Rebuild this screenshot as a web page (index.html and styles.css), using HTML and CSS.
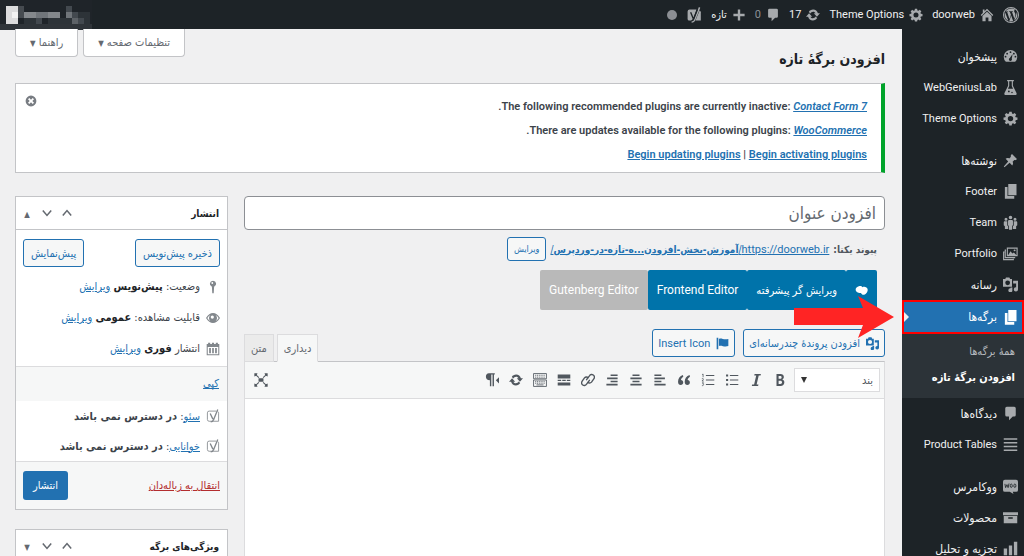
FILE: index.html
```html
<!DOCTYPE html>
<html lang="fa" dir="rtl">
<head>
<meta charset="utf-8">
<title>افزودن برگهٔ تازه</title>
<link rel="stylesheet" href="styles.css">
</head>
<body>
<svg class="sprite" aria-hidden="true">
  <symbol id="i-wp" viewBox="0 0 20 20"><path fill-rule="evenodd" d="M10 0a10 10 0 1 0 0 20a10 10 0 1 0 0-20zM10 1.2a8.8 8.8 0 1 1 0 17.6a8.8 8.8 0 1 1 0-17.6z"/><path d="M2 10c0 3.3 1.9 6 4.6 7.300L2.700 6.900C2.200 7.800 2 8.900 2 10zM15.500 9.600c0-1-.4-1.700-.7-2.300-.4-.7-.9-1.300-.9-2 0-.8.6-1.500 1.500-1.500C12 .9 6 1.500 3.400 5.600h.5l2.200-.1c.4 0 .4.600 0 .6l-.9.100 2.900 8.700 1.800-5.300-1.300-3.500-.8-.1c-.5 0-.4-.7 0-.7l2.200.1 2.200-.1c.4 0 .5.600 0 .7l-.9.100 2.900 8.600.8-2.600c.3-1.100.5-1.900.5-2.500zM10.200 10.700l-2.400 7c1.600.4 3.300.4 4.900-.2l-2.500-6.800zM17 6.200c.2 1-.1 2.200-.5 3.400L14 16.900c3.700-2.100 5-6.800 3-10.700z"/></symbol>
  <symbol id="i-home" viewBox="0 0 20 20"><path d="M10 1l9 9-1.300 1.300L10 3.700l-7.700 7.600L1 10l3-3V2h2.500v2.500zM10 5.200l6.500 6.300V19h-4.500v-5.500H8V19H3.500v-7.500z"/></symbol>
  <symbol id="i-gear" viewBox="0 0 20 20"><path fill-rule="evenodd" d="M8.400 1h3.200l.4 2.400 1.500.6 2-1.400 2.200 2.300-1.400 2 .6 1.400 2.400.4v3l-2.400.5-.6 1.400 1.400 2-2.200 2.200-2-1.400-1.500.6-.4 2.400H8.400L8 17l-1.500-.6-2 1.400-2.200-2.200 1.400-2-.6-1.400L.700 11.700v-3l2.400-.4.600-1.400-1.400-2 2.200-2.300 2 1.400L8 3.400zM10 6.500a3.600 3.600 0 1 0 0 7.200a3.600 3.600 0 1 0 0-7.200z"/></symbol>
  <symbol id="i-update" viewBox="0 0 20 20"><path d="M10.200 2.300c3.300 0 6 2.200 6.800 5.300H20l-4.400 5-4.400-5h2.500c-.8-1.600-2-2.400-3.500-2.400-1.800 0-3.200 1-3.900 2.500L4 5.600c1.300-2 3.500-3.300 6.200-3.300zM4.400 7.400l4.400 5H6.300c.8 1.600 2 2.400 3.500 2.400 1.800 0 3.200-1 3.900-2.500l2.300 2.100c-1.300 2-3.500 3.300-6.200 3.300-3.300 0-6-2.200-6.800-5.300H0z"/></symbol>
  <symbol id="i-comment" viewBox="0 0 20 20"><path d="M5 1h10a2 2 0 0 1 2 2v9a2 2 0 0 1-2 2h-2l-5 5v-5H5a2 2 0 0 1-2-2V3a2 2 0 0 1 2-2z"/></symbol>
  <symbol id="i-plus" viewBox="0 0 20 20"><path d="M8.300 2h3.400v6.300H18v3.400h-6.300V18H8.300v-6.300H2V8.300h6.300z"/></symbol>
  <symbol id="i-yoast" viewBox="0 0 20 20"><path d="M4.500 3h8.700L8.600 15.500H7.300l1.500 1.500H4a2 2 0 0 1-2-2V5.500A2.500 2.500 0 0 1 4.500 3z"/><path d="M17 4.500c1 .5 1.500 1.200 1.500 2.200V17h-6.700z"/><path fill="none" stroke="currentColor" stroke-width="1.900" d="M17 .500L11 15.600c-.7 2-1.900 3.200-4 3.200"/><path fill="none" stroke="#1d2327" stroke-width="1.700" d="M5.800 6.500l3.600 8.700M14.200 3L9.300 15.600c-.4 1-1 1.500-2.600 1.700"/></symbol>
  <symbol id="i-yoastline" viewBox="0 0 20 20"><g fill="none" stroke="currentColor"><path d="M14.500 3H4.500A2.500 2.500 0 0 0 2 5.500V15a2.500 2.500 0 0 0 2.500 2.500H18V6c0-1-.5-2-1.200-2.500" stroke-width="1.200"/><path d="M6 6.500l3.800 8M16.800.8l-6 14.500c-.8 2-1.800 3.200-4 3.200" stroke-width="1.900"/></g></symbol>
  <symbol id="i-dash" viewBox="0 0 20 20"><path fill-rule="evenodd" d="M3.800 17h12.400A9 9 0 1 0 3.800 17zM10 3a1.200 1.200 0 1 1 0 2.400A1.200 1.200 0 0 1 10 3zM5.500 5a1.200 1.200 0 1 1 0 2.400a1.200 1.200 0 0 1 0-2.400zM14.500 5a1.200 1.200 0 1 1 0 2.400a1.200 1.200 0 0 1 0-2.400zM3.400 9a1.200 1.200 0 1 1 0 2.400a1.200 1.200 0 0 1 0-2.400zM16.600 9a1.200 1.200 0 1 1 0 2.400a1.200 1.200 0 0 1 0-2.400zM12.800 6.500L11.700 13a2 2 0 1 1-2.600-1z"/></symbol>
  <symbol id="i-flask" viewBox="0 0 20 20"><path fill-rule="evenodd" d="M5.500 0h9v1.600h-1.300v6l4.800 9.600c.7 1.600-.2 2.800-1.500 2.800h-13C2.200 20 1.300 18.800 2 17.200l4.800-9.600v-6H5.500zM8.300 1.600v6.500l-1.700 3.400h6.800l-1.700-3.400V1.600zM7.800 14a1.200 1.200 0 1 0 0 2.400a1.200 1.200 0 0 0 0-2.400zM12 15.500a1 1 0 1 0 0 2a1 1 0 0 0 0-2z"/></symbol>
  <symbol id="i-pin" viewBox="0 0 20 20"><path d="M10.400 3l1.600-1.600 6.600 6.600L17 9.600c-1-.3-1.800-.2-2.500.4l-1.700 1.800c1 1.700.7 3.400-.5 4.700l-3.500-3.500L2 19l-.9-.900 5.800-6.900-3.400-3.400C4.800 6.500 6.500 6.200 8.200 7.200L10 5.500c.6-.7.700-1.600.4-2.500z"/></symbol>
  <symbol id="i-pages" viewBox="0 0 20 20"><path d="M7 0h11v15H7zM2.500 4H6v12h9v3.500H2.500z"/></symbol>
  <symbol id="i-team" viewBox="0 0 20 20"><path d="M10 1a2.400 2.400 0 1 1 0 4.800A2.400 2.400 0 0 1 10 1zM4 3.500a2 2 0 1 1 0 4a2 2 0 0 1 0-4zM16 3.500a2 2 0 1 1 0 4a2 2 0 0 1 0-4zM8.500 6.500h3c1 0 1.800.7 1.800 1.800V13.500l-1.300 1v5H8v-5l-1.300-1V8.300C6.700 7.200 7.500 6.500 8.500 6.500zM2.500 8.300h3.200V14l1.300 1v3.500H2.500V15L1 13.500v-3.500C1 9 1.500 8.300 2.500 8.300zM17.500 8.300h-3.200V14L13 15v3.500h4.500V15l1.500-1.500v-3.500c0-1-.5-1.700-1.500-1.700z"/></symbol>
  <symbol id="i-gallery" viewBox="0 0 20 20"><g fill="none" stroke="currentColor" stroke-width="1.500"><path d="M5.800 2.800h13v10h-13zM4 5.500H3v10h12.500V14.500M2 8H.8v10.200h13V17"/></g><path d="M7 12l3-5 2.500 3 2-1.500 3.200 3.500z"/><circle cx="15.500" cy="5.800" r="1.300"/></symbol>
  <symbol id="i-media" viewBox="0 0 20 20"><path fill-rule="evenodd" d="M1 2.500h2l1-2h4.500l1 2H12V13H0V2.500zM6.200 4.500a3.200 3.200 0 1 0 0 6.400a3.200 3.200 0 0 0 0-6.400zM13.500 5H20v11.500a2.800 2.800 0 1 1-2.500-2.800V8.500h-4zM10 14h2.500v3.500A2.700 2.700 0 1 1 10 15z"/></symbol>
  <symbol id="i-lines" viewBox="0 0 20 20"><path d="M1 1.500h18v2H1zM1 6.500h18v2H1zM1 11.500h18v2H1zM1 16.500h18v2H1z"/></symbol>
  <symbol id="i-woo" viewBox="0 0 20 20"><path d="M2.500 1h15A2.500 2.500 0 0 1 20 3.500v11a2.500 2.500 0 0 1-2.500 2.500H13l1 3-5-3H2.500A2.500 2.500 0 0 1 0 14.500v-11A2.500 2.500 0 0 1 2.500 1z"/><g fill="none" stroke="#1d2327" stroke-width="1.100"><path d="M2.500 6.500l1 5 1.800-4 1.500 4 1.200-5.500"/><ellipse cx="11" cy="9" rx="1.400" ry="2.300"/><ellipse cx="15.800" cy="9" rx="1.400" ry="2.300"/></g></symbol>
  <symbol id="i-box" viewBox="0 0 20 20"><path fill-rule="evenodd" d="M0 3h20v4H0zM1 8h18v9.500H1zM7 9.500v2h6v-2z"/></symbol>
  <symbol id="i-chart" viewBox="0 0 20 20"><path d="M1 10h4.500v9H1zM7.800 6h4.400v13H7.800zM14.500 1H19v18h-4.500z"/></symbol>
  <symbol id="i-up" viewBox="0 0 20 20"><path fill="none" stroke="currentColor" stroke-width="2.600" d="M3 14l7-8 7 8"/></symbol>
  <symbol id="i-down" viewBox="0 0 20 20"><path fill="none" stroke="currentColor" stroke-width="2.600" d="M3 6l7 8 7-8"/></symbol>
  <symbol id="i-key" viewBox="0 0 20 20"><path fill-rule="evenodd" d="M10 1a4.500 4.500 0 0 1 1.600 8.700L11 19H9l-.6-9.300A4.500 4.500 0 0 1 10 1zM9 3a1.300 1.300 0 1 0 0 2.600A1.300 1.300 0 0 0 9 3z"/></symbol>
  <symbol id="i-eye" viewBox="0 0 20 20"><path fill-rule="evenodd" d="M0 10C3 5 6.300 2.800 10 2.800S17 5 20 10c-3 5-6.300 7.200-10 7.200S3 15 0 10zM2 10c1 2 2.400 3.500 4.200 4.400a6 6 0 0 1 0-8.800C4.400 6.500 3 8 2 10zM18 10c-1-2-2.400-3.500-4.200-4.400a6 6 0 0 1 0 8.800C15.600 13.500 17 12 18 10zM9 6.300a2.300 2.300 0 1 0 0 4.600a2.300 2.300 0 0 0 0-4.600z"/></symbol>
  <symbol id="i-cal" viewBox="0 0 20 20"><path fill-rule="evenodd" d="M1 3h2V1h3v2h2.500V1h3v2H14V1h3v2h2v16H1zM2.500 7v10.500h15V7zM4.500 8.500H7v7.500H4.500zM8.800 8.500h2.400v7.500H8.800zM13 8.500h2.500v7.500H13z"/></symbol>
  <symbol id="i-flag" viewBox="0 0 20 20"><path d="M1 1h2.500v18H1zM4.500 3c4-2 7 2 14.500 0v11c-7 2-10.500-2-14.500 0z"/></symbol>
  <symbol id="i-blob" viewBox="0 0 20 20"><path d="M6 3.500c2.500-1 4.500 0 5.500 1.500 2.500-1.500 7.500-.5 8 3.500.5 5-5 9-7.500 8-1.500-.3-2-1.500-3-2.500-2.500 0-7.500-.5-8-5C.7 6 3.500 4 6 3.500z"/></symbol>
  <symbol id="i-close" viewBox="0 0 20 20"><path fill-rule="evenodd" d="M10 1a9 9 0 1 0 0 18a9 9 0 1 0 0-18zM7.200 5L10 7.800 12.800 5 15 7.200 12.200 10l2.800 2.800-2.200 2.200-2.800-2.800L7.200 15 5 12.800 7.800 10 5 7.200z"/></symbol>
  <symbol id="i-bold" viewBox="0 0 20 20"><path fill-rule="evenodd" d="M5 1.500h5.500c3.200 0 5 1.500 5 4.200 0 1.700-.8 2.900-2.200 3.600 1.900.5 2.900 2 2.900 4 0 3.200-2.100 5.200-5.500 5.200H5zM8 4.300v4h2.200c1.300 0 2.100-.7 2.100-2s-.8-2-2.100-2zM8 11v4.600h2.500c1.500 0 2.400-.8 2.400-2.300S12 11 10.500 11z"/></symbol>
  <symbol id="i-italic" viewBox="0 0 20 20"><path d="M8 1.500h9l-.5 2.200h-2.600l-3 12.600h2.600l-.5 2.200H4l.5-2.200h2.800l3-12.600H7.500z"/></symbol>
  <symbol id="i-ul" viewBox="0 0 20 20"><path d="M1.500 2h3v3h-3zM1.500 8.500h3v3h-3zM1.500 15h3v3h-3zM7 3h12v1.400H7zM7 9.300h12v1.400H7zM7 15.700h12v1.400H7z"/></symbol>
  <symbol id="i-ol" viewBox="0 0 20 20"><path d="M7 3h12v1.400H7zM7 9.300h12v1.400H7zM7 15.700h12v1.400H7z"/><path fill="none" stroke="currentColor" stroke-width="1.100" d="M1.500 2.300L3 1.500V6M1.200 8.200c2-1 3 .4 1.500 1.800l-1.300 1.500H4M1.400 14h2.300l-1.200 1.800c2.200 0 1.500 2.700-1.200 2.200"/></symbol>
  <symbol id="i-quote" viewBox="0 0 20 20"><path d="M8.500 3C4 4.500 1.500 8 1.500 12.500c0 3 1.600 4.700 3.800 4.700 2.100 0 3.600-1.500 3.600-3.600 0-2-1.300-3.400-3.200-3.500.2-2 1.300-3.500 3.300-4.800zM18 3c-4.500 1.500-7 5-7 9.500 0 3 1.600 4.700 3.800 4.700 2.100 0 3.600-1.500 3.600-3.600 0-2-1.300-3.400-3.200-3.500.2-2 1.300-3.500 3.300-4.800z"/></symbol>
  <symbol id="i-al" viewBox="0 0 20 20"><path d="M2 2h10v2.300H2zM2 6.500h15v2.300H2zM2 11h10v2.300H2zM2 15.500h16v2.300H2z"/></symbol>
  <symbol id="i-ac" viewBox="0 0 20 20"><path d="M5 2h10v2.300H5zM2 6.500h16v2.300H2zM5 11h10v2.300H5zM2 15.500h16v2.300H2z"/></symbol>
  <symbol id="i-ar" viewBox="0 0 20 20"><path d="M8 2h10v2.300H8zM3 6.500h15v2.300H3zM8 11h10v2.300H8zM2 15.500h16v2.300H2z"/></symbol>
  <symbol id="i-link" viewBox="0 0 20 20"><g fill="none" stroke="currentColor" stroke-width="2" stroke-linecap="round"><path d="M8 9.500L12 4c3-4.500 9.500 0 6.300 4.500L15 13c-1.500 1.700-4 1.700-5.300.3M12 10.500L8 16c-3 4.500-9.500 0-6.300-4.500L5 7c1.500-1.700 4-1.700 5.300-.3"/></g></symbol>
  <symbol id="i-more" viewBox="0 0 20 20"><path d="M1 2h18v6H1zM1 9.700h5v1.800H1zM7.500 9.700h5v1.800h-5zM14 9.700h5v1.800h-5zM1 13.500h18V18H1z"/></symbol>
  <symbol id="i-kb" viewBox="0 0 20 20"><g fill="none" stroke="currentColor" stroke-width="1.200"><path d="M.8.800h18.400v7.400H.8zM.8 10h18.400v9.200H.8z"/><path d="M3 3.200h14M3 5.900h14M3 12.400h14M3 14.600h14" stroke-dasharray="1.600 1"/><path d="M5 17h10"/></g></symbol>
  <symbol id="i-para" viewBox="0 0 20 20"><path d="M5.500.500H14v1.800h-1.200V19h-2V2.300H9V19H7V10.500C-.9 10 .2.500 5.500.500zM20 6v9l-4.500-4.500z"/></symbol>
  <symbol id="i-full" viewBox="0 0 20 20"><path d="M6.500 7.500h7v5h-7zM.5.500H5l-1 2.300L7.500 6l-1 1L3 3.800.500 5zM19.500.500H15l1 2.300L12.500 6l1 1L17 3.800l2.500 1.200zM.5 19.500H5l-1-2.300L7.500 14l-1-1L3 16.200.500 15zM19.500 19.500H15l1-2.300-3.500-3.200 1-1 3.500 3.200 2.500-1.200z"/></symbol>
</svg>

<header class="bar">
  <nav class="bar-items">
    <a class="bar-item wp" href="#" aria-label="WordPress"><svg><use href="#i-wp"/></svg></a>
    <a class="bar-item en" href="#"><svg><use href="#i-home"/></svg>doorweb</a>
    <a class="bar-item en" href="#"><svg><use href="#i-gear"/></svg>Theme Options</a>
    <a class="bar-item en" href="#"><svg><use href="#i-update"/></svg>17</a>
    <a class="bar-item en dim" href="#"><svg><use href="#i-comment"/></svg>0</a>
    <a class="bar-item" href="#"><svg><use href="#i-plus"/></svg>تازه</a>
    <a class="bar-item yoast" href="#" aria-label="سئو"><svg><use href="#i-yoast"/></svg><span class="dot"></span></a>
  </nav>
  <svg class="account" viewBox="0 0 92 30" aria-hidden="true"><path fill="#2f3439" d="M0 0h92v30H0z"/><path fill="#1f2429" d="M0 0h92v24H0z"/><path fill="#dcdcdd" d="M6 6h12v18H6z"/><path fill="#f2f2f2" d="M12 12h6v6h-6z"/><path fill="#464b50" d="M18 6h6v12h-6z"/><path fill="#84888c" d="M24 12h12v6H24zM48 12h12v6H48z"/><path fill="#70757a" d="M36 12h12v6H36zM66 12h6v6h-6z"/><path fill="#43494f" d="M72 12h6v6h-6zM66 6h6v6h-6zM36 18h6v6h-6zM78 18h6v6h-6z"/><path fill="#5d6267" d="M72 18h6v6h-6z"/><path fill="#2d3338" d="M78 12h12v6H78zM24 18h12v6H24zM48 18h24v6H48zM84 18h6v6h-6z"/></svg>
</header>

<div class="shell">
  <aside class="menu">
    <a class="mi" href="#"><svg><use href="#i-dash"/></svg>پیشخوان</a>
    <a class="mi en" href="#"><svg><use href="#i-flask"/></svg>WebGeniusLab</a>
    <a class="mi en" href="#"><svg><use href="#i-gear"/></svg>Theme Options</a>
    <a class="mi gap" href="#"><svg><use href="#i-pin"/></svg>نوشته‌ها</a>
    <a class="mi en" href="#"><svg><use href="#i-pages"/></svg>Footer</a>
    <a class="mi en" href="#"><svg><use href="#i-team"/></svg>Team</a>
    <a class="mi en" href="#"><svg><use href="#i-gallery"/></svg>Portfolio</a>
    <a class="mi" href="#"><svg><use href="#i-media"/></svg>رسانه</a>
    <div class="current">
      <a class="mi on" href="#"><svg><use href="#i-pages"/></svg>برگه‌ها</a>
      <svg class="arrow" viewBox="0 0 100 42" aria-hidden="true"><path fill="#ff2424" d="M0 12h69L64 0l36 21-36 21 5-13H0z"/></svg>
    </div>
    <div class="sub">
      <a href="#">همهٔ برگه‌ها</a>
      <a class="here" href="#">افزودن برگهٔ تازه</a>
    </div>
    <a class="mi" href="#"><svg><use href="#i-comment"/></svg>دیدگاه‌ها</a>
    <a class="mi en" href="#"><svg><use href="#i-lines"/></svg>Product Tables</a>
    <a class="mi gap" href="#"><svg><use href="#i-woo"/></svg>ووکامرس</a>
    <a class="mi" href="#"><svg><use href="#i-box"/></svg>محصولات</a>
    <a class="mi" href="#"><svg><use href="#i-chart"/></svg>تجزیه و تحلیل</a>
  </aside>

  <main class="main">
    <div class="top">
      <h1>افزودن برگهٔ تازه</h1>
      <div class="meta">
        <button type="button">تنظیمات صفحه <i>▼</i></button>
        <button type="button">راهنما <i>▼</i></button>
      </div>
    </div>

    <section class="notice">
      <div class="notice-text en">
        <p>The following recommended plugins are currently inactive: <a href="#"><em>Contact Form 7</em></a>.</p>
        <p>There are updates available for the following plugins: <a href="#"><em>WooCommerce</em></a>.</p>
        <p><a href="#">Begin updating plugins</a> | <a href="#">Begin activating plugins</a></p>
      </div>
      <button class="dismiss" type="button" aria-label="بستن"><svg><use href="#i-close"/></svg></button>
    </section>

    <div class="cols">
      <section class="edit">
        <input class="title" type="text" placeholder="افزودن عنوان" aria-label="افزودن عنوان">
        <div class="perma">
          <b>پیوند یکتا:</b>
          <a href="#" dir="rtl"><bdi class="en">https://doorweb.ir</bdi>/<b>آموزش-بخش-افزودن...ه-تازه-در-وردپرس</b>/</a>
          <button class="btn small" type="button">ویرایش</button>
        </div>
        <div class="switch">
          <button type="button" aria-label="ویرایشگر"><svg><use href="#i-blob"/></svg></button>
          <button type="button">ویرایش گر پیشرفته</button>
          <button class="en" type="button">Frontend Editor</button>
          <button class="en off" type="button">Gutenberg Editor</button>
        </div>
        <div class="tools">
          <button class="btn" type="button"><svg><use href="#i-media"/></svg>افزودن پروندهٔ چندرسانه‌ای</button>
          <button class="btn en" type="button"><svg><use href="#i-flag"/></svg>Insert Icon</button>
          <div class="tabs">
            <button class="active" type="button">دیداری</button>
            <button type="button">متن</button>
          </div>
        </div>
        <div class="editor">
          <div class="toolbar">
            <select aria-label="قالب"><option>بند</option></select>
            <button type="button" aria-label="ضخیم"><svg><use href="#i-bold"/></svg></button>
            <button type="button" aria-label="کج"><svg><use href="#i-italic"/></svg></button>
            <button type="button" aria-label="فهرست"><svg><use href="#i-ul"/></svg></button>
            <button type="button" aria-label="فهرست شماره‌دار"><svg><use href="#i-ol"/></svg></button>
            <button type="button" aria-label="نقل قول"><svg><use href="#i-quote"/></svg></button>
            <button type="button" aria-label="چپ‌چین"><svg><use href="#i-al"/></svg></button>
            <button type="button" aria-label="وسط‌چین"><svg><use href="#i-ac"/></svg></button>
            <button type="button" aria-label="راست‌چین"><svg><use href="#i-ar"/></svg></button>
            <button type="button" aria-label="پیوند"><svg><use href="#i-link"/></svg></button>
            <button type="button" aria-label="ادامه"><svg><use href="#i-more"/></svg></button>
            <button type="button" aria-label="نوار ابزار"><svg><use href="#i-kb"/></svg></button>
            <button type="button" aria-label="به‌روزرسانی"><svg><use href="#i-update"/></svg></button>
            <button type="button" aria-label="جهت متن"><svg><use href="#i-para"/></svg></button>
            <button class="full" type="button" aria-label="تمام صفحه"><svg><use href="#i-full"/></svg></button>
          </div>
          <textarea aria-label="محتوا"></textarea>
        </div>
      </section>

      <aside class="side">
        <section class="panel">
          <div class="panel-head">
            <h2>انتشار</h2>
            <button type="button" aria-label="بالا"><svg><use href="#i-up"/></svg></button>
            <button type="button" aria-label="پایین"><svg><use href="#i-down"/></svg></button>
            <button type="button" aria-label="بستن"><i>▲</i></button>
          </div>
          <div class="save">
            <button class="btn" type="button">ذخیره پیش‌نویس</button>
            <button class="btn" type="button">پیش‌نمایش</button>
          </div>
          <div class="status">
            <p><svg><use href="#i-key"/></svg><span>وضعیت: <b>پیش‌نویس</b> <a href="#">ویرایش</a></span></p>
            <p><svg><use href="#i-eye"/></svg><span>قابلیت مشاهده: <b>عمومی</b> <a href="#">ویرایش</a></span></p>
            <p><svg><use href="#i-cal"/></svg><span>انتشار <b>فوری</b> <a href="#">ویرایش</a></span></p>
          </div>
          <div class="copy"><a href="#">کپی</a></div>
          <div class="scores">
            <p><svg><use href="#i-yoastline"/></svg><span><a href="#">سئو</a>: <b>در دسترس نمی باشد</b></span></p>
            <p><svg><use href="#i-yoastline"/></svg><span><a href="#">خوانایی</a>: <b>در دسترس نمی باشد</b></span></p>
          </div>
          <div class="publish">
            <a href="#">انتقال به زباله‌دان</a>
            <button type="button">انتشار</button>
          </div>
        </section>
        <section class="panel">
          <div class="panel-head">
            <h2>ویژگی‌های برگه</h2>
            <button type="button" aria-label="بالا"><svg><use href="#i-up"/></svg></button>
            <button type="button" aria-label="پایین"><svg><use href="#i-down"/></svg></button>
            <button type="button" aria-label="باز کردن"><i>▼</i></button>
          </div>
        </section>
      </aside>
    </div>
  </main>
</div>
</body>
</html>
```
FILE: styles.css
```css
* { box-sizing: border-box; }
body, button, input, select, textarea {
  font-family: "DejaVu Sans Condensed", "DejaVu Sans", sans-serif;
  font-size: 11px;
}
body {
  margin: 0;
  height: 100vh;
  overflow: hidden;
  display: flex;
  flex-direction: column;
  background: #f0f0f1;
  color: #3c434a;
}
.en { font-family: Roboto, "DejaVu Sans Condensed", sans-serif; }
p, h1, h2 { margin: 0; }
a { color: #2271b1; }
button { cursor: pointer; }
i { font-style: normal; font-size: 8px; }
svg { fill: currentColor; flex: none; }
.sprite { position: absolute; width: 0; height: 0; }

.bar {
  flex: none;
  height: 29px;
  display: flex;
  justify-content: space-between;
  background: #1d2327;
  color: #f0f0f1;
}
.bar-items { display: flex; align-items: center; gap: 9px; padding-right: 5px; }
.bar-item { display: flex; align-items: center; gap: 5px; color: inherit; text-decoration: none; }
.bar-item svg { width: 14px; height: 14px; color: #a7aaad; }
.bar-item.wp svg { width: 16px; height: 16px; }
.bar-item.yoast { gap: 9px; }
.bar-item.yoast svg { width: 16px; height: 18px; }
.bar-item.dim { color: #8c9196; }
.dot { width: 10px; height: 10px; border-radius: 50%; background: #8c8f94; }
.account { width: 92px; height: 30px; }

.shell { flex: 1; min-height: 0; display: flex; }
.menu { flex: none; width: 122px; padding-top: 12px; background: #1d2327; font-size: 12px; }
.menu .en { font-size: 11px; }
.mi {
  display: flex;
  align-items: center;
  gap: 6px;
  height: 31px;
  padding-right: 6px;
  color: #f0f0f1;
  text-decoration: none;
  white-space: nowrap;
}
.mi svg { width: 15px; height: 15px; color: #a7aaad; }
.mi.gap { margin-top: 11px; }
.current { position: relative; }
.mi.on { height: 34px; padding-right: 4px; background: #2271b1; border: 2px solid #f00; color: #fff; }
.mi.on svg { color: #fff; }
.current::before {
  content: "";
  position: absolute;
  left: 2px;
  top: 12px;
  border: 5px solid transparent;
  border-left-color: #f0f0f1;
  border-right-width: 0;
}
.arrow { position: absolute; right: 100%; top: -4px; width: 100px; height: 42px; margin-right: 8px; z-index: 2; }
.sub { padding: 5px 9px 7px 0; background: #2c3338; font-size: 11px; }
.sub a { display: block; line-height: 26px; color: #b4b9be; text-decoration: none; white-space: nowrap; }
.sub .here { color: #fff; font-weight: bold; }

.main { flex: 1; min-width: 0; padding: 0 17px 0 15px; }
.top { display: flex; justify-content: space-between; height: 54px; }
h1 { align-self: center; padding-top: 6px; font-size: 14px; color: #1d2327; }
.meta { display: flex; align-items: flex-start; gap: 5px; }
.meta button {
  height: 28px;
  padding: 0 14px;
  background: #fff;
  border: 1px solid #c3c4c7;
  border-top: 0;
  border-radius: 0 0 4px 4px;
  color: #646970;
}
.notice {
  display: flex;
  justify-content: space-between;
  align-items: flex-start;
  padding: 11px 14px 5px 9px;
  background: #fff;
  border: 1px solid #c3c4c7;
  border-right: 4px solid #00a32a;
}
.notice p { font-weight: 600; line-height: 24px; font-size: 11px; }
.dismiss { border: 0; padding: 0; background: none; color: #787c82; }
.dismiss svg { width: 12px; height: 12px; display: block; }

.cols { display: flex; gap: 16px; margin-top: 23px; }
.edit { flex: 1; min-width: 0; }
.title {
  display: block;
  width: 100%;
  height: 34px;
  padding: 0 8px;
  border: 1px solid #8c8f94;
  border-radius: 4px;
  font-size: 17px;
}
.title::placeholder { color: #646970; opacity: 1; }
.perma { display: flex; align-items: center; gap: 4px; height: 24px; margin-top: 7px; padding-right: 8px; font-size: 10px; white-space: nowrap; color: #50575e; }
.perma .en { font-size: 11px; }
.btn {
  display: flex;
  align-items: center;
  justify-content: center;
  gap: 6px;
  height: 28px;
  padding: 0 7px;
  background: #f6f7f7;
  border: 1px solid #2271b1;
  border-radius: 3px;
  color: #2271b1;
  white-space: nowrap;
}
.btn svg { width: 13px; height: 13px; }
.btn.small { height: 24px; padding: 0 6px; font-size: 9px; }
.switch { display: flex; margin-top: 9px; padding-right: 8px; }
.switch button {
  height: 40px;
  padding: 0 9px;
  border: 0;
  background: #0073aa;
  border-radius: 2px;
  color: #fff;
}
.switch .en { font-size: 12px; }
.switch button.off { background: #b9b9b9; }
.switch svg { width: 13px; height: 13px; display: block; }
.tools { display: flex; align-items: flex-start; gap: 8px; margin-top: 19px; height: 32px; }
.tools .btn { padding: 0 5px; }
.tabs { display: flex; gap: 3px; margin-right: auto; padding-top: 5px; }
.tabs button { height: 28px; padding: 0 6px; background: #ebebeb; border: 1px solid #dcdcde; color: #646970; }
.tabs .active { background: #f6f7f7; border-bottom-color: #f6f7f7; }
.editor { border: 1px solid #dcdcde; border-top-color: #c3c4c7; background: #fff; }
.toolbar { display: flex; align-items: center; height: 37px; padding: 0 4px; background: #f6f7f7; border-bottom: 1px solid #dcdcde; }
.toolbar select {
  width: 86px;
  height: 24px;
  margin-left: 2px;
  padding: 0 6px;
  border: 1px solid #dcdcde;
  appearance: none;
  background: #fff url("data:image/svg+xml,%3Csvg xmlns='http://www.w3.org/2000/svg' width='6' height='6'%3E%3Cpath fill='%23333' d='M0 0h6L3 6z'/%3E%3C/svg%3E") no-repeat 6px center;
  color: #50575e;
}
.toolbar button { flex: 0 1 auto; width: 24px; height: 24px; padding: 5px; border: 0; background: none; color: #50575e; }
.toolbar svg { display: block; width: 14px; height: 14px; }
.toolbar .full { margin-right: auto; }
textarea { display: block; width: 100%; height: 400px; border: 0; resize: none; }

.side { flex: none; width: 213px; }
.panel { margin-bottom: 19px; background: #fff; border: 1px solid #c3c4c7; }
.panel-head { display: flex; align-items: center; gap: 8px; height: 33px; padding: 0 8px 0 5px; border-bottom: 1px solid #c3c4c7; }
.panel-head h2 { flex: 1; font-size: 10px; color: #1d2327; }
.panel-head button { display: block; padding: 0; width: 12px; border: 0; background: none; color: #646970; }
.panel-head svg { display: block; width: 12px; height: 12px; }
.save { display: flex; justify-content: space-between; padding: 9px 7px 4px; }
.status p, .scores p { display: flex; align-items: center; gap: 6px; height: 31px; padding-right: 7px; white-space: nowrap; }
.status svg, .scores svg { width: 14px; height: 14px; color: #82878c; }
.status { padding-bottom: 2px; }
.status b { color: #1d2327; }
.copy { padding: 0 8px; border-top: 1px solid #dcdcde; background: #f6f7f7; line-height: 34px; }
.scores p { height: 30px; }
.publish { display: flex; align-items: center; justify-content: space-between; height: 48px; padding: 0 7px; border-top: 1px solid #dcdcde; background: #f6f7f7; }
.publish a { color: #b32d2e; }
.publish button { height: 29px; padding: 0 10px; border: 0; border-radius: 3px; background: #2271b1; color: #fff; }
```
